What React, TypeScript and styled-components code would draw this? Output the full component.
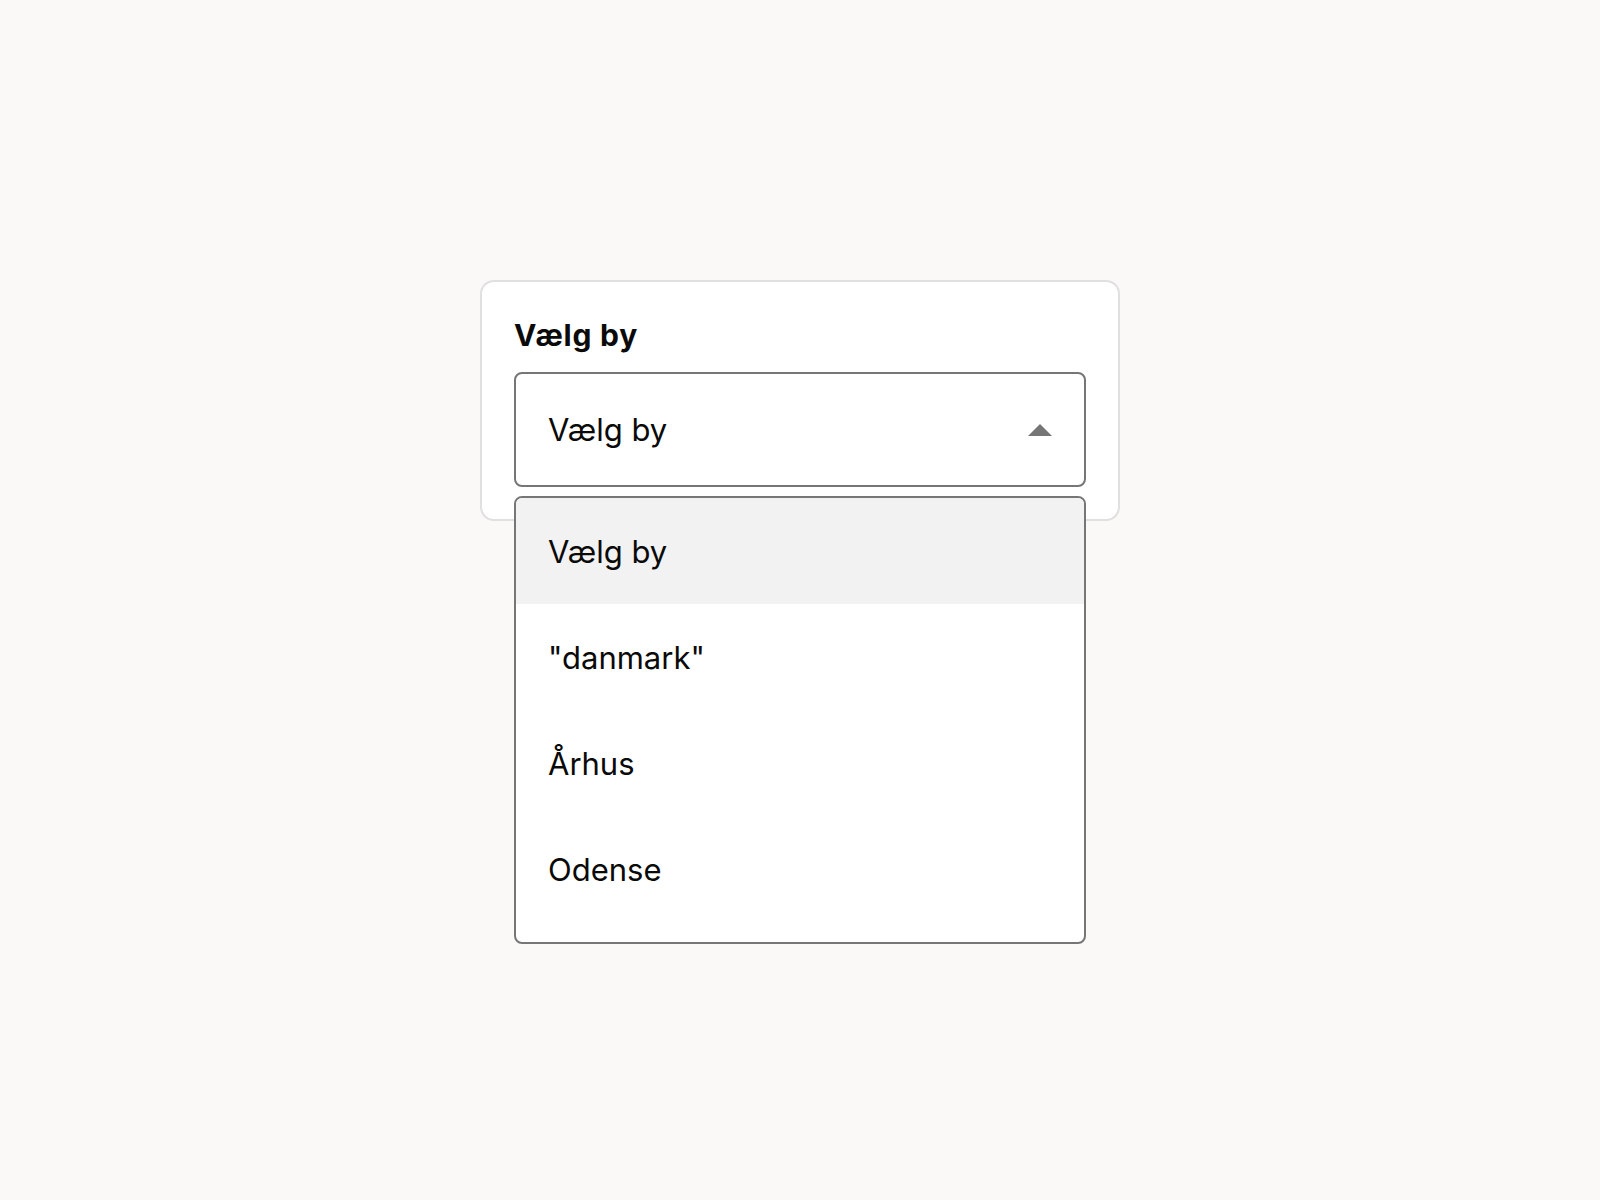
import React from "react";
import styled, { createGlobalStyle } from "styled-components";

const Global = createGlobalStyle`
  html, body { margin: 0; padding: 0; background: #faf9f7; }
  body { font-family: Inter, "Noto Sans", Arial, sans-serif; color: #111; }
  * { box-sizing: border-box; }
`;

const Page = styled.div`
  min-height: 1200px;
  padding-top: 280px;
  display: flex;
  justify-content: center;
  align-items: flex-start;
`;

const Card = styled.div`
  width: 640px;
  background: #ffffff;
  border: 2px solid #e0e0e0;
  border-radius: 14px;
  padding: 32px;
`;

const Label = styled.label`
  display: block;
  font-size: 30px;
  font-weight: 700;
  letter-spacing: 0.8px;
  line-height: 38px;
  margin: 2px 0 18px;
  color: #0a0a0a;
`;

const SelectWrap = styled.div`
  position: relative;
`;

const Trigger = styled.div`
  height: 115px;
  border: 2px solid #767676;
  border-radius: 8px;
  padding: 0 32px;
  display: flex;
  align-items: center;
  justify-content: space-between;
  font-size: 31px;
  color: #0a0a0a;
`;

const Arrow = styled.svg`
  width: 24px;
  height: 12px;
  display: block;
`;

const ListBox = styled.ul`
  position: absolute;
  top: calc(100% + 9px);
  left: 0;
  right: 0;
  margin: 0;
  padding: 0 0 20px;
  list-style: none;
  background: #ffffff;
  border: 2px solid #767676;
  border-radius: 8px;
  overflow: hidden;
`;

const Option = styled.li<{ $active?: boolean }>`
  height: 106px;
  display: flex;
  align-items: center;
  padding-left: 32px;
  font-size: 31px;
  color: #0a0a0a;
  background: ${(p) => (p.$active ? "#f2f2f2" : "#ffffff")};
`;

const options = ["Vælg by", "\"danmark\"", "Århus", "Odense"];

export default function App() {
  return (
    <>
      <Global />
      <Page>
        <Card>
          <Label>Vælg by</Label>
          <SelectWrap>
            <Trigger>
              <span>Vælg by</span>
              <Arrow viewBox="0 0 24 12">
                <polygon points="0,12 12,0 24,12" fill="#767676" />
              </Arrow>
            </Trigger>
            <ListBox>
              {options.map((o, i) => (
                <Option key={o} $active={i === 0}>
                  {o}
                </Option>
              ))}
            </ListBox>
          </SelectWrap>
        </Card>
      </Page>
    </>
  );
}
